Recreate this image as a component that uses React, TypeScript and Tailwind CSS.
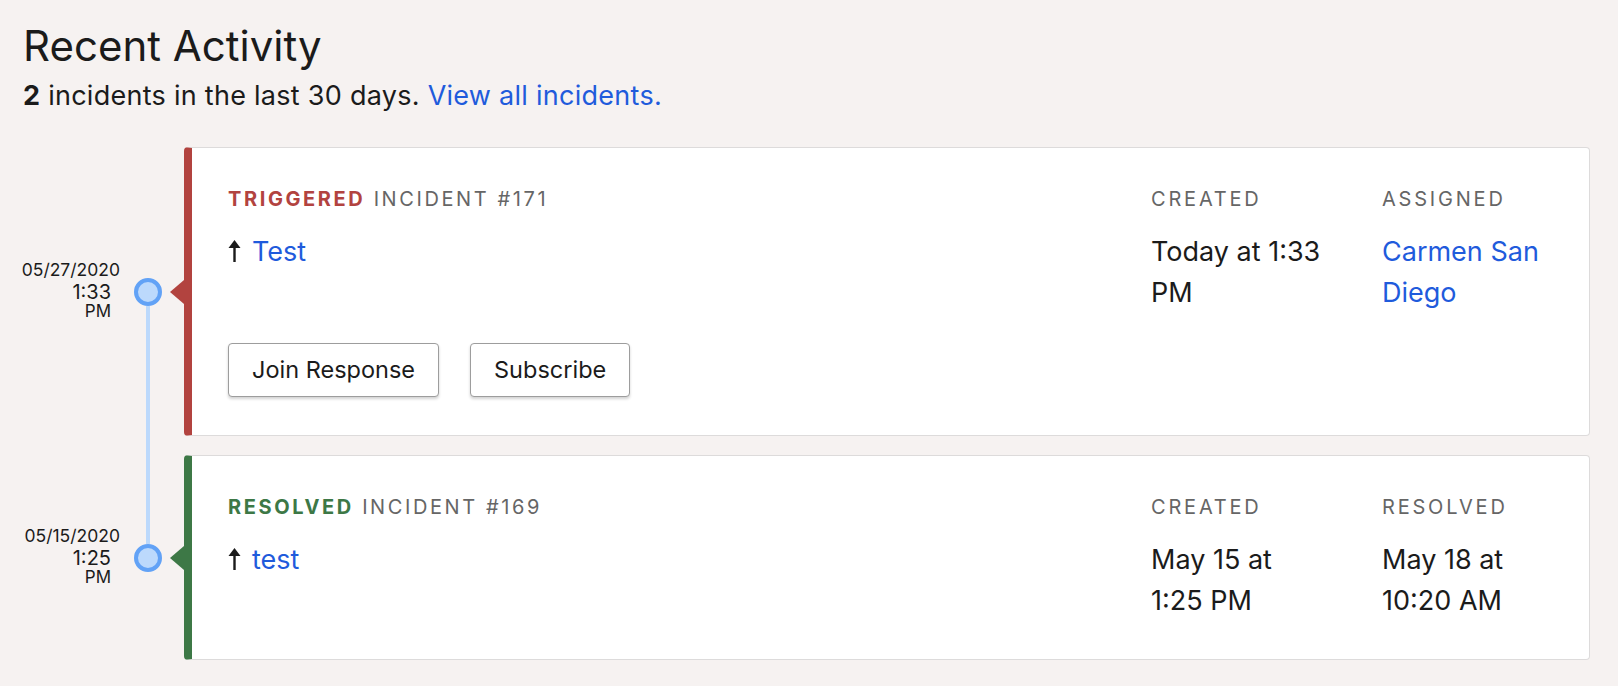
type Incident = {
  date: string
  time: string
  ampm: string
  status: string
  statusColor: string
  number: number
  title: string
  created: string
  otherLabel: string
  other: string
  otherIsLink: boolean
  actions: boolean
}

const incidents: Incident[] = [
  {
    date: '05/27/2020',
    time: '1:33',
    ampm: 'PM',
    status: 'Triggered',
    statusColor: 'red',
    number: 171,
    title: 'Test',
    created: 'Today at 1:33 PM',
    otherLabel: 'Assigned',
    other: 'Carmen San Diego',
    otherIsLink: true,
    actions: true,
  },
  {
    date: '05/15/2020',
    time: '1:25',
    ampm: 'PM',
    status: 'Resolved',
    statusColor: 'green',
    number: 169,
    title: 'test',
    created: 'May 15 at 1:25 PM',
    otherLabel: 'Resolved',
    other: 'May 18 at 10:20 AM',
    otherIsLink: false,
    actions: false,
  },
]

function UpArrow() {
  return (
    <svg width="13" height="22" viewBox="0 0 13 22" className="mr-[11px] inline-block align-[-1px]">
      <path d="M6.5 0 L12.5 8 L0.5 8 Z" fill="#1b1b1b" />
      <rect x="5.3" y="6" width="2.4" height="16" fill="#1b1b1b" />
    </svg>
  )
}

function TimelineRow({ item, first, last }: { item: Incident; first: boolean; last: boolean }) {
  const red = item.statusColor === 'red'
  return (
    <div className="flex items-stretch">
      {/* date */}
      <div className="flex w-[111px] flex-col">
        <div className="flex flex-1 flex-col items-end justify-center pb-[4px] pr-[14px] text-right">
          <div className="text-[17.5px] leading-[22px]">{item.date}</div>
          <div className="pr-[9px] text-[20px] leading-[22px]">{item.time}</div>
          <div className="pr-[9px] text-[17px] leading-[17px]">{item.ampm}</div>
        </div>
        {!last && <div className="h-[19px]" />}
      </div>

      {/* dot + line */}
      <div className="flex w-[28px] flex-col items-center">
        <div className={`w-[4px] flex-1 ${first ? '' : 'bg-[#bcd9fc]'}`} />
        <div className="h-[28px] w-[28px] rounded-full border-[4px] border-[#62a2f6] bg-[#bcd9fc]" />
        <div className={`w-[4px] flex-1 ${last ? '' : 'bg-[#bcd9fc]'}`} />
        {!last && <div className="h-[19px] w-[4px] bg-[#bcd9fc]" />}
      </div>

      {/* card */}
      <div className="flex flex-1 flex-col">
        <div className="flex flex-1">
          <div className="flex w-[22px] items-center justify-end">
            <div
              className={`h-0 w-0 border-y-[12px] border-r-[14px] border-y-transparent ${
                red ? 'border-r-[#b2433f]' : 'border-r-[#3d7846]'
              }`}
            />
          </div>
          <div
            className={`flex-1 rounded-[4px] border border-[#dddbdb] border-l-[8px] bg-white pb-[38px] pl-[36px] pr-[37px] pt-[39px] ${
              red ? 'border-l-[#b2433f]' : 'border-l-[#3d7846]'
            }`}
          >
            <div className="flex">
              <div className="flex-1">
                <div className="text-[20px] uppercase leading-[24px] tracking-[0.13em] text-[#666666]">
                  <span className={`font-bold ${red ? 'text-[#b2433f]' : 'text-[#3d7846]'}`}>{item.status}</span>{' '}
                  Incident #{item.number}
                </div>
                <div className="mt-[20px] text-[27px] leading-[41px]">
                  <UpArrow />
                  <a href="#" className="text-[#1f5bdc]">
                    {item.title}
                  </a>
                </div>
              </div>
              <div className="grid grid-cols-[173px_170px] gap-x-[58px]">
                <div>
                  <div className="text-[20px] uppercase leading-[24px] tracking-[0.14em] text-[#666666]">Created</div>
                  <div className="mt-[20px] text-[27px] leading-[41px]">{item.created}</div>
                </div>
                <div>
                  <div className="text-[20px] uppercase leading-[24px] tracking-[0.14em] text-[#666666]">
                    {item.otherLabel}
                  </div>
                  <div className={`mt-[20px] text-[27px] leading-[41px] ${item.otherIsLink ? 'text-[#1f5bdc]' : ''}`}>
                    {item.other}
                  </div>
                </div>
              </div>
            </div>
            {item.actions && (
              <div className="mt-[30px] flex gap-[31px]">
                <button className="h-[54px] rounded-[4px] border border-[#9d9d9d] bg-white px-[23px] text-[23.5px] shadow-[0_2px_3px_rgba(0,0,0,0.18)]">
                  Join Response
                </button>
                <button className="h-[54px] rounded-[4px] border border-[#9d9d9d] bg-white px-[23px] text-[23.5px] shadow-[0_2px_3px_rgba(0,0,0,0.18)]">
                  Subscribe
                </button>
              </div>
            )}
          </div>
        </div>
        {!last && <div className="h-[19px]" />}
      </div>
    </div>
  )
}

export default function App() {
  return (
    <div className="min-h-screen bg-[#f6f2f1] pl-[23px] pr-[28px] pt-[21px] font-['Inter',sans-serif] text-[#1b1b1b]">
      <h1 className="text-[42px] leading-[50px]">Recent Activity</h1>
      <p className="mt-[8px] text-[27px] leading-[34px] tracking-[0.01em]">
        <b>2</b> incidents in the last 30 days.{' '}
        <a href="#" className="text-[#1f5bdc]">
          View all incidents.
        </a>
      </p>
      <div className="mt-[34px] flex flex-col">
        {incidents.map((item, i) => (
          <TimelineRow key={item.number} item={item} first={i === 0} last={i === incidents.length - 1} />
        ))}
      </div>
    </div>
  )
}
